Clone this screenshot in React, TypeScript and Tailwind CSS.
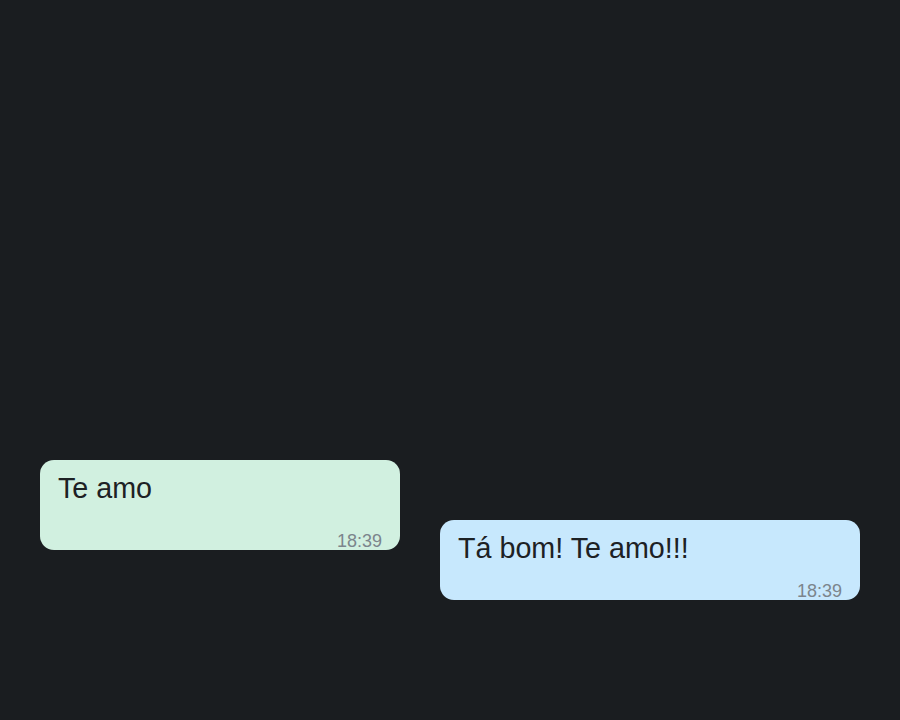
const messages = [
  { id: 1, text: "Te amo", time: "18:39", mine: false },
  { id: 2, text: "Tá bom! Te amo!!!", time: "18:39", mine: true },
];

const Bubble = ({ text, time, mine }: { text: string; time: string; mine: boolean }) => {
  return (
    <div
      className={
        mine
          ? "flex flex-col w-[420px] h-[80px] rounded-[14px] bg-[#c7e8fd] px-[18px] pt-[12px]"
          : "flex flex-col w-[360px] h-[90px] mb-[50px] rounded-[14px] bg-[#d1f0e0] px-[18px] pt-[12px]"
      }
    >
      <p className="text-[28.7px] leading-[32px] text-[#1d2124]">{text}</p>
      <span className="mt-auto self-end text-[18px] leading-[18px] text-[#7c858c]">{time}</span>
    </div>
  );
};

const App = () => {
  return (
    <div
      className="h-[720px] w-full bg-[#1a1d20] flex items-end gap-10 px-10 pb-[120px]"
      style={{ fontFamily: '"Liberation Sans", Arial, sans-serif' }}
    >
      {messages.map((m) => (
        <Bubble key={m.id} text={m.text} time={m.time} mine={m.mine} />
      ))}
    </div>
  );
};

export default App;
